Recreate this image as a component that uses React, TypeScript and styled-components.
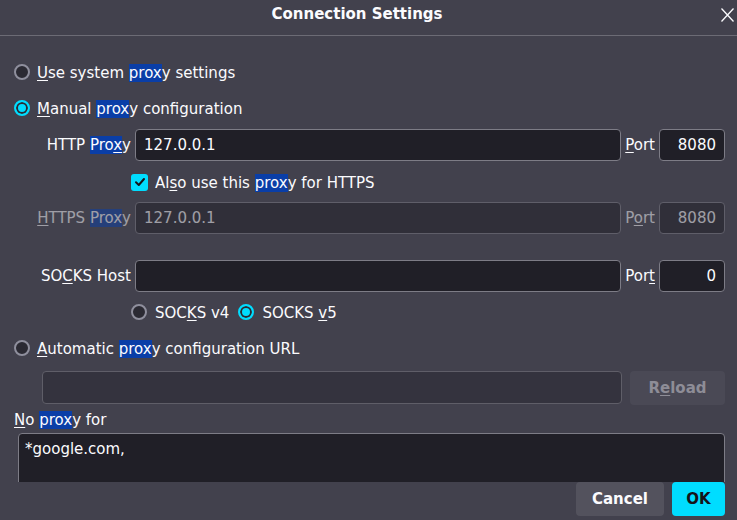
import React from "react";
import styled, { createGlobalStyle, css } from "styled-components";

const Global = createGlobalStyle`
  html, body {
    margin: 0;
    padding: 0;
    background: #42414d;
  }
  body {
    font-family: "DejaVu Sans", "Noto Sans", sans-serif;
    font-size: 15px;
    line-height: 20px;
    color: #fbfbfe;
  }
  * { box-sizing: border-box; }
`;

const Dialog = styled.div`
  width: 737px;
  height: 520px;
  display: flex;
  flex-direction: column;
  background: #42414d;
  overflow: hidden;
`;

const Header = styled.div`
  height: 36px;
  flex: none;
  display: flex;
  align-items: flex-start;
  border-bottom: 1px solid #6c6b75;
`;

const Title = styled.div`
  flex: 1;
  text-align: center;
  font-weight: bold;
  padding-top: 4px;
`;

const CloseButton = styled.div`
  width: 23px;
  padding-top: 8px;
  display: flex;
  justify-content: flex-start;
  svg { display: block; margin-left: 7px; }
`;

const Body = styled.div`
  flex: 1;
  min-height: 0;
  overflow: hidden;
  padding: 24px 12px 0 14px;
  display: flex;
  flex-direction: column;
  & > * { flex-shrink: 0; }
`;

const OptionRow = styled.label<{ $mt?: number; $indent?: number }>`
  display: flex;
  align-items: center;
  height: 24px;
  gap: 7px;
  margin-top: ${(p) => p.$mt ?? 0}px;
  padding-left: ${(p) => p.$indent ?? 0}px;
  white-space: nowrap;
`;

const OptionText = styled.span`
  padding-top: 2px;
`;

const OptionGroup = styled.div<{ $mt?: number; $indent?: number }>`
  display: flex;
  align-items: center;
  gap: 9px;
  height: 24px;
  margin-top: ${(p) => p.$mt ?? 0}px;
  padding-left: ${(p) => p.$indent ?? 0}px;
`;

const Option = styled.span`
  display: flex;
  align-items: center;
  gap: 8px;
  white-space: nowrap;
`;

const Radio = styled.span<{ $checked?: boolean }>`
  width: 16px;
  height: 16px;
  flex: none;
  border-radius: 50%;
  border: 2px solid #8f8f9d;
  background: #2b2a33;
  ${(p) =>
    p.$checked &&
    css`
      border-color: #00ddff;
      background: #00ddff;
      box-shadow: inset 0 0 0 2px #2b2a33;
    `}
`;

const Checkbox = styled.span`
  width: 17px;
  height: 17px;
  flex: none;
  border-radius: 3px;
  background: #00ddff;
  display: flex;
  align-items: center;
  justify-content: center;
`;

const Mark = styled.mark`
  background: #0a3ea7;
  color: inherit;
`;

const Key = styled.u`
  text-decoration: underline;
  text-underline-offset: 2px;
`;

const ProxyRow = styled.div<{ $mt?: number; $dim?: boolean }>`
  display: grid;
  grid-template-columns: 117px 1fr auto 66px;
  column-gap: 4px;
  align-items: center;
  height: 32px;
  margin-top: ${(p) => p.$mt ?? 0}px;
  opacity: ${(p) => (p.$dim ? 0.5 : 1)};
`;

const FieldLabel = styled.span`
  justify-self: end;
  white-space: nowrap;
`;

const TextInput = styled.input<{ $align?: "left" | "right" }>`
  height: 32px;
  width: 100%;
  min-width: 0;
  background: #201f27;
  border: 1px solid #7d7c86;
  border-radius: 4px;
  color: #fbfbfe;
  font: inherit;
  padding: 0 8px;
  text-align: ${(p) => p.$align ?? "left"};
  outline: none;
`;

const UrlRow = styled.div`
  display: flex;
  gap: 8px;
  margin-top: 11px;
  padding-left: 28px;
  height: 33px;
`;

const UrlInput = styled.input`
  flex: 1;
  height: 33px;
  background: #34333e;
  border: 1px solid #5f5e68;
  border-radius: 4px;
  font: inherit;
  color: #fbfbfe;
  outline: none;
`;

const Button = styled.button<{ $variant: "default" | "primary" | "disabled"; $w: number }>`
  height: 34px;
  width: ${(p) => p.$w}px;
  border: none;
  border-radius: 4px;
  font-family: inherit;
  font-size: 15px;
  font-weight: bold;
  padding: 0;
  ${(p) =>
    p.$variant === "primary"
      ? css`
          background: #00ddff;
          color: #15141a;
        `
      : p.$variant === "disabled"
      ? css`
          background: #4a4955;
          color: #8e8d97;
        `
      : css`
          background: #53525d;
          color: #fbfbfe;
        `}
`;

const NoProxyLabel = styled.div`
  margin-top: 5px;
  height: 20px;
  padding-top: 1px;
  white-space: nowrap;
`;

const TextArea = styled.textarea`
  margin: 4px 0 0 4px;
  height: 70px;
  background: #201f27;
  border: 1px solid #7d7c86;
  border-radius: 4px;
  color: #fbfbfe;
  font: inherit;
  line-height: 20px;
  padding: 5px 6px;
  resize: none;
  outline: none;
`;

const Footer = styled.div`
  flex: none;
  display: flex;
  justify-content: flex-end;
  gap: 8px;
  padding: 0 12px 4px 0;
`;

const CloseIcon = () => (
  <svg width="13" height="14" viewBox="0 0 13 14">
    <path d="M0.5 0.5 L12.5 13.5 M12.5 0.5 L0.5 13.5" stroke="#fbfbfe" strokeWidth="1.3" fill="none" />
  </svg>
);

const CheckIcon = () => (
  <svg width="12" height="12" viewBox="0 0 12 12">
    <path d="M2 6.3 L4.8 9 L10 3" stroke="#15141a" strokeWidth="2" fill="none" strokeLinecap="round" strokeLinejoin="round" />
  </svg>
);

export default function App() {
  return (
    <>
      <Global />
      <Dialog>
        <Header>
          <Title>Connection Settings</Title>
          <CloseButton>
            <CloseIcon />
          </CloseButton>
        </Header>
        <Body>
          <OptionRow>
            <Radio />
            <OptionText>
              <Key>U</Key>se system <Mark>prox</Mark>y settings
            </OptionText>
          </OptionRow>
          <OptionRow $mt={12}>
            <Radio $checked />
            <OptionText>
              <Key>M</Key>anual <Mark>prox</Mark>y configuration
            </OptionText>
          </OptionRow>

          <ProxyRow $mt={9}>
            <FieldLabel>
              HTTP <Mark>Pro<Key>x</Key></Mark>y
            </FieldLabel>
            <TextInput defaultValue="127.0.0.1" />
            <span>
              <Key>P</Key>ort
            </span>
            <TextInput $align="right" defaultValue="8080" />
          </ProxyRow>

          <OptionRow $mt={9} $indent={117}>
            <Checkbox>
              <CheckIcon />
            </Checkbox>
            <OptionText>
              Al<Key>s</Key>o use this <Mark>prox</Mark>y for HTTPS
            </OptionText>
          </OptionRow>

          <ProxyRow $mt={8} $dim>
            <FieldLabel>
              <Key>H</Key>TTPS <Mark>Prox</Mark>y
            </FieldLabel>
            <TextInput defaultValue="127.0.0.1" disabled />
            <span>
              P<Key>o</Key>rt
            </span>
            <TextInput $align="right" defaultValue="8080" disabled />
          </ProxyRow>

          <ProxyRow $mt={26}>
            <FieldLabel>
              SO<Key>C</Key>KS Host
            </FieldLabel>
            <TextInput defaultValue="" />
            <span>
              Por<Key>t</Key>
            </span>
            <TextInput $align="right" defaultValue="0" />
          </ProxyRow>

          <OptionGroup $mt={8} $indent={117}>
            <Option>
              <Radio />
              <OptionText>
                SOC<Key>K</Key>S v4
              </OptionText>
            </Option>
            <Option>
              <Radio $checked />
              <OptionText>
                SOCKS <Key>v</Key>5
              </OptionText>
            </Option>
          </OptionGroup>

          <OptionRow $mt={12}>
            <Radio />
            <OptionText>
              <Key>A</Key>utomatic <Mark>prox</Mark>y configuration URL
            </OptionText>
          </OptionRow>

          <UrlRow>
            <UrlInput disabled />
            <Button $variant="disabled" $w={95}>
              R<Key>e</Key>load
            </Button>
          </UrlRow>

          <NoProxyLabel>
            <Key>N</Key>o <Mark>prox</Mark>y for
          </NoProxyLabel>
          <TextArea defaultValue="*google.com," />
        </Body>
        <Footer>
          <Button $variant="default" $w={88}>
            Cancel
          </Button>
          <Button $variant="primary" $w={53}>
            OK
          </Button>
        </Footer>
      </Dialog>
    </>
  );
}
